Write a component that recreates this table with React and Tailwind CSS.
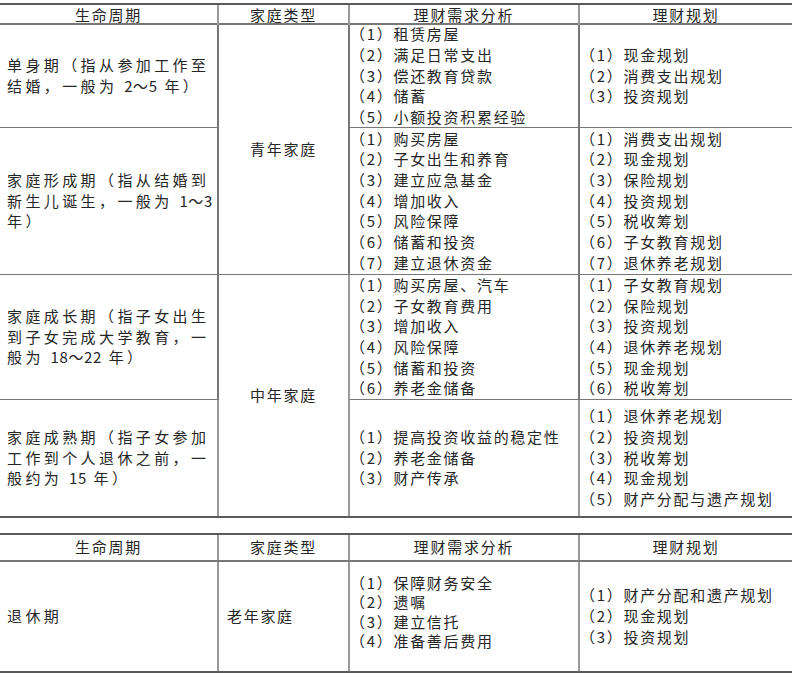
const TOP_ROWS = [
  {
    stage: ['单身期（指从参加工作至', '结婚，一般为 2～5 年）'],
    needs: ['租赁房屋', '满足日常支出', '偿还教育贷款', '储蓄', '小额投资积累经验'],
    plans: ['现金规划', '消费支出规划', '投资规划'],
  },
  {
    stage: ['家庭形成期（指从结婚到', '新生儿诞生，一般为 1～3', '年）'],
    needs: ['购买房屋', '子女出生和养育', '建立应急基金', '增加收入', '风险保障', '储蓄和投资', '建立退休资金'],
    plans: ['消费支出规划', '现金规划', '保险规划', '投资规划', '税收筹划', '子女教育规划', '退休养老规划'],
  },
  {
    stage: ['家庭成长期（指子女出生', '到子女完成大学教育，一', '般为 18～22 年）'],
    needs: ['购买房屋、汽车', '子女教育费用', '增加收入', '风险保障', '储蓄和投资', '养老金储备'],
    plans: ['子女教育规划', '保险规划', '投资规划', '退休养老规划', '现金规划', '税收筹划'],
  },
  {
    stage: ['家庭成熟期（指子女参加', '工作到个人退休之前，一', '般约为 15 年）'],
    needs: ['提高投资收益的稳定性', '养老金储备', '财产传承'],
    plans: ['退休养老规划', '投资规划', '税收筹划', '现金规划', '财产分配与遗产规划'],
  },
];

const ROW_POS = ['row-start-1', 'row-start-2', 'row-start-3', 'row-start-4'];

const HEADERS = ['生命周期', '家庭类型', '理财需求分析', '理财规划'];

// digits and the wave dash sit tighter than the CJK glyphs
function StageLine({ text }) {
  const parts = text.split(/([0-9～]+)/);
  return (
    <div className="whitespace-nowrap">
      {parts.map((p, i) =>
        /[0-9～]/.test(p) ? (
          <span key={i} className="tracking-[0.6px]">{p}</span>
        ) : (
          <span key={i}>{p}</span>
        )
      )}
    </div>
  );
}

function List({ items }) {
  return (
    <div className="flex flex-col">
      {items.map((t, i) => (
        <div key={i}>（{i + 1}）{t}</div>
      ))}
    </div>
  );
}

function Header({ h }) {
  return (
    <div className={`grid grid-cols-[219px_131px_230px_1fr] ${h} border-b-2 border-[#777]`}>
      {HEADERS.map((t, i) => (
        <div
          key={t}
          className={`flex items-center justify-center tracking-[1.8px] ${i < 3 ? 'border-r-2 border-[#9a9a9a]' : ''}`}
        >
          {t}
        </div>
      ))}
    </div>
  );
}

export default function App() {
  return (
    <div className="w-[800px] h-[677px] bg-white pt-[3px] text-[15px] leading-[20.7px] text-[#262626] font-['Noto_Sans_CJK_SC',sans-serif]">
      {/* upper table */}
      <div className="w-[792px] border-y-2 border-[#5a5a5a]">
        <Header h="h-[20px]" />
        <div className="grid grid-cols-[219px_131px_230px_1fr] grid-rows-[103px_147px_125px_116px]">
          {TOP_ROWS.map((r, i) => (
            <div
              key={'s' + i}
              className={`col-start-1 ${ROW_POS[i]} flex flex-col justify-center pl-[7px] tracking-[3.4px] border-r-2 border-[#9a9a9a] ${i < 3 ? 'border-b border-[#777]' : ''}`}
            >
              {r.stage.map((l) => (
                <StageLine key={l} text={l} />
              ))}
            </div>
          ))}
          <div className="col-start-2 row-start-1 row-span-2 flex items-center justify-center tracking-[1.7px] border-r-2 border-[#9a9a9a] border-b border-[#777]">
            青年家庭
          </div>
          <div className="col-start-2 row-start-3 row-span-2 flex items-center justify-center tracking-[1.7px] border-r-2 border-[#9a9a9a]">
            中年家庭
          </div>
          {TOP_ROWS.map((r, i) => (
            <div
              key={'n' + i}
              className={`col-start-3 ${ROW_POS[i]} flex flex-col justify-center tracking-[1.7px] border-r-2 border-[#9a9a9a] ${i < 3 ? 'border-b border-[#777]' : ''}`}
            >
              <List items={r.needs} />
            </div>
          ))}
          {TOP_ROWS.map((r, i) => (
            <div
              key={'p' + i}
              className={`col-start-4 ${ROW_POS[i]} flex flex-col justify-center tracking-[1.7px] ${i < 3 ? 'border-b border-[#777]' : ''}`}
            >
              <List items={r.plans} />
            </div>
          ))}
        </div>
      </div>

      {/* lower table */}
      <div className="mt-[15px] w-[792px] border-y-2 border-[#5a5a5a]">
        <Header h="h-[27px]" />
        <div className="grid grid-cols-[219px_131px_230px_1fr] h-[109px]">
          <div className="flex items-center pl-[7px] tracking-[3.4px] border-r-2 border-[#9a9a9a]">
            退休期
          </div>
          <div className="flex items-center pl-[8px] tracking-[1.7px] border-r-2 border-[#9a9a9a]">
            老年家庭
          </div>
          <div className="flex flex-col justify-center pb-[10px] leading-[19.5px] tracking-[1.7px] border-r-2 border-[#9a9a9a]">
            <List items={['保障财务安全', '遗嘱', '建立信托', '准备善后费用']} />
          </div>
          <div className="flex flex-col justify-center tracking-[1.7px]">
            <List items={['财产分配和遗产规划', '现金规划', '投资规划']} />
          </div>
        </div>
      </div>
    </div>
  );
}
